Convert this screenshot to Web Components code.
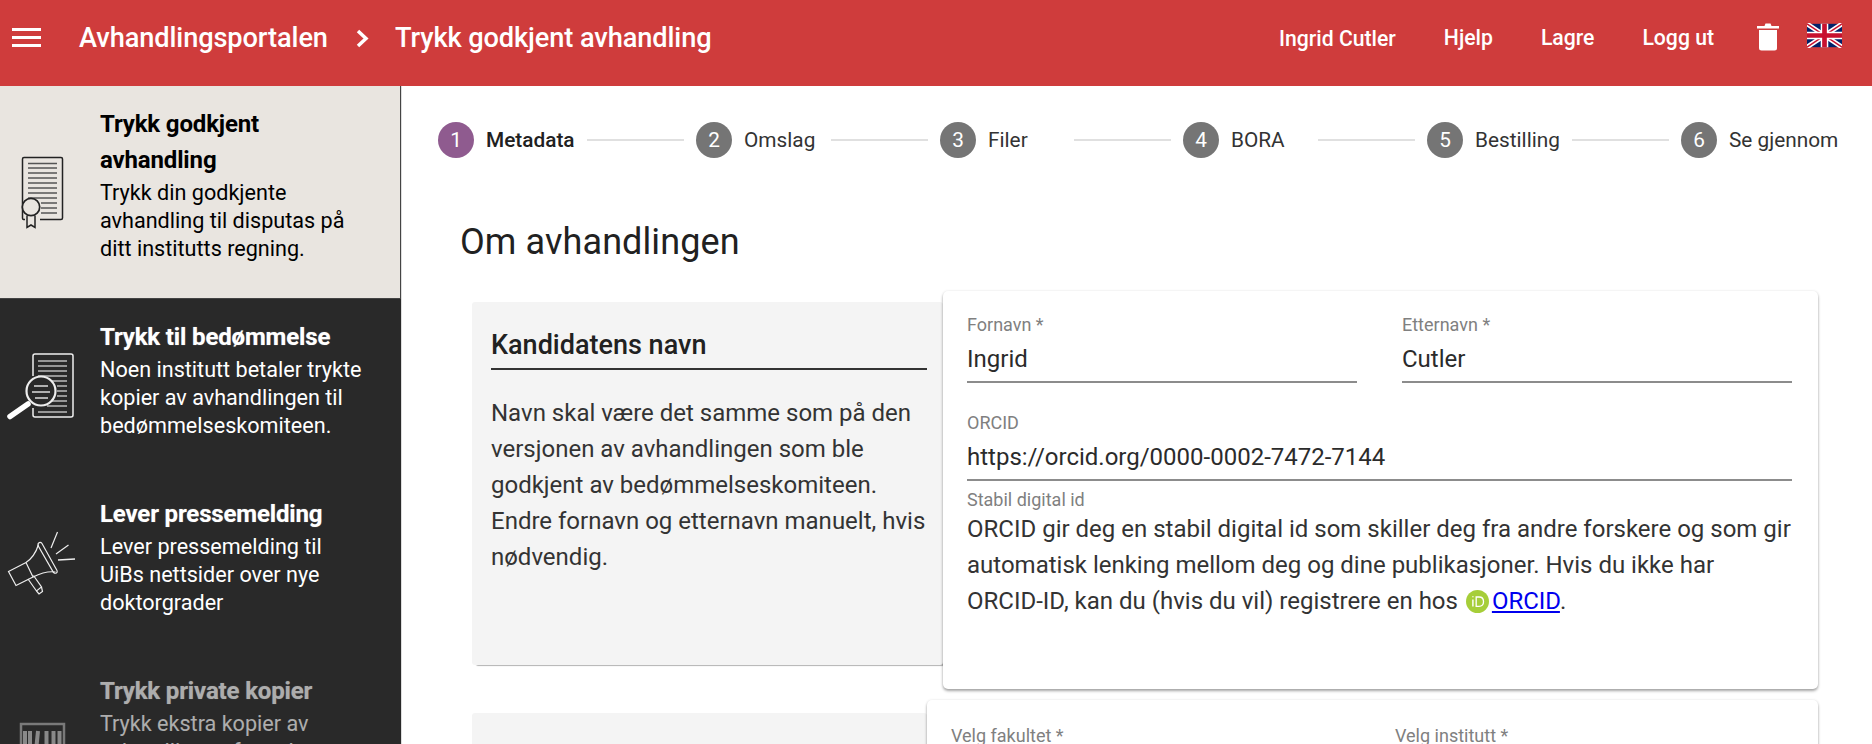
<!DOCTYPE html>
<html lang="no">
<head>
<meta charset="utf-8">
<title>Avhandlingsportalen</title>
<style>
  html, body { margin: 0; height: 100%; overflow: hidden; background: #fff; }
  body { font-family: Roboto, "Liberation Sans", sans-serif; }
</style>
</head>
<body>
<portal-app>
  <top-bar slot="top" crumb="Avhandlingsportalen" page="Trykk godkjent avhandling"></top-bar>

  <side-menu slot="side">
    <side-item active>
      <svg slot="icon" width="84" height="84" viewBox="0 0 84 84" fill="none" stroke="#222">
        <path d="M25 68.500h-1.500a1.500 1.500 0 0 1-1-1.500V8a1.500 1.500 0 0 1 1.500-1.500h37a1.500 1.500 0 0 1 1.500 1.500v59a1.500 1.500 0 0 1-1.500 1.500H40" stroke-width="1.500"/>
        <path d="M28 12.500h29M28 17h29M28 22h29M28 27h29M28 32h29M28 37h29M28 42h29M28 47h29M41 52h16M41 57h16M41 62h16" stroke="#555" stroke-width="1.300"/>
        <circle cx="31" cy="56" r="8.700" fill="#e9e5e0" stroke-width="1.700"/>
        <path d="M27 64.500v12l4-2.500 4 2.500v-12" stroke-width="1.500"/>
      </svg>
      <span slot="title">Trykk godkjent avhandling</span>
      Trykk din godkjente avhandling til disputas på ditt institutts regning.
    </side-item>
    <side-item>
      <svg slot="icon" width="84" height="84" viewBox="0 0 84 84" fill="none" stroke="#eee">
        <path d="M33 30V10a2 2 0 0 1 2-2h36a2 2 0 0 1 2 2v59a2 2 0 0 1-2 2H35a2 2 0 0 1-2-2v-7" stroke-width="1.500"/>
        <path d="M38 15h29M38 20h29M38 25h29M38 30h29M50 35h17M57 40h10M57 45h10M57 50h10M50 55h17M47 60h20M38 66h29" stroke="#bbb" stroke-width="1.500"/>
        <circle cx="41" cy="45" r="14.500" fill="#292929" stroke-width="2.200"/>
        <path d="M34 40h14M32 46h18M35 52h13" stroke="#ddd" stroke-width="1.500"/>
        <path d="M10 70.500 28 58" stroke="#fff" stroke-width="5.500" stroke-linecap="round"/>
      </svg>
      <span slot="title">Trykk til bedømmelse</span>
      Noen institutt betaler trykte kopier av avhandlingen til bedømmelseskomiteen.
    </side-item>
    <side-item>
      <svg slot="icon" width="84" height="84" viewBox="0 0 84 84" fill="none" stroke="#eee" stroke-width="1.200">
        <path d="M8.500 48.500 26 39.500l7 14.500-17 8.500z"/>
        <path d="M26 39.500c6-4 10-10 12.500-18M33 54c8-4 15-6 22.500-5"/>
        <path d="M38 22.500c-.5-3 2.500-4 4-2l15 27c1 2.500-1.500 3.500-3.500 2z"/>
        <path d="M28 56l8.500 12 5-4-8-11.500M36.500 68l2.500 3 3.500-2.500-1-4.500"/>
        <path d="M57.500 9 51 25M68.500 22 56 31"/>
        <path d="M58 37l17-1" stroke-width="1.600"/>
      </svg>
      <span slot="title">Lever pressemelding</span>
      Lever pressemelding til UiBs nettsider over nye doktorgrader
    </side-item>
    <side-item disabled>
      <svg slot="icon" width="84" height="84" viewBox="0 0 84 84" fill="none" stroke="#aaa">
        <rect x="21" y="24" width="43" height="60" stroke-width="2.500"/>
        <path d="M25 31v40M30 31v40M38 31l-4 40M46.500 31v40M53.500 31v40M59.500 31v40" stroke="#c4c4c4" stroke-width="4"/>
      </svg>
      <span slot="title">Trykk private kopier</span>
      Trykk ekstra kopier av avhandlingen for salg.
    </side-item>
  </side-menu>

  <step-bar slot="main">
    <step-item n="1" label="Metadata" width="89" active></step-item>
    <step-item n="2" label="Omslag" width="75"></step-item>
    <step-item n="3" label="Filer" width="74"></step-item>
    <step-item n="4" label="BORA" width="75"></step-item>
    <step-item n="5" label="Bestilling" width="85"></step-item>
    <step-item n="6" label="Se gjennom" width="111" last></step-item>
  </step-bar>

  <page-heading slot="main">Om avhandlingen</page-heading>

  <form-section slot="main" card-width="875" inset="11" info-height="363">
    <span slot="title">Kandidatens navn</span>
    <span slot="info">Navn skal være det samme som på den versjonen av avhandlingen som ble godkjent av bedømmelseskomiteen. Endre fornavn og etternavn manuelt, hvis nødvendig.</span>
    <form-card style="--card-height:398px">
      <div style="display:grid;grid-template-columns:390px 390px;column-gap:45px">
        <text-field label="Fornavn *" value="Ingrid"></text-field>
        <text-field label="Etternavn *" value="Cutler"></text-field>
      </div>
      <text-field label="ORCID" value="https://orcid.org/0000-0002-7472-7144" helper="Stabil digital id" style="margin-top:28px">
        ORCID gir deg en stabil digital id som skiller deg fra andre forskere og som gir automatisk lenking mellom deg og dine publikasjoner. Hvis du ikke har ORCID-ID, kan du (hvis du vil) registrere en hos <orcid-link></orcid-link>.
      </text-field>
    </form-card>
  </form-section>

  <form-section slot="main" card-width="891" inset="13" info-height="200" style="margin-top:11px">
    <span slot="title"></span>
    <form-card style="--card-height:200px;--card-top:24px">
      <div style="display:grid;grid-template-columns:395px 395px;column-gap:49px">
        <text-field label="Velg fakultet *"></text-field>
        <text-field label="Velg institutt *"></text-field>
      </div>
    </form-card>
  </form-section>
</portal-app>

<script>
class PortalApp extends HTMLElement {
  constructor() {
    super();
    this.attachShadow({ mode: 'open' }).innerHTML = `
      <style>
        :host { display: block; height: 744px; overflow: hidden; color: #212121; }
        .body { display: flex; height: 658px; }
        .main { flex: 1; min-width: 0; overflow: hidden; padding: 36px 54px 0 36px; }
      </style>
      <slot name="top"></slot>
      <div class="body">
        <slot name="side"></slot>
        <div class="main"><slot name="main"></slot></div>
      </div>`;
  }
}

class TopBar extends HTMLElement {
  constructor() {
    super();
    this.attachShadow({ mode: 'open' }).innerHTML = `
      <style>
        :host { display: flex; height: 86px; background: #cf3c3c; color: #fff; font-weight: 500; padding: 0 30px 0 12px; box-sizing: border-box; }
        .row { display: flex; align-items: center; height: 74px; }
        .left { flex: 1; height: 76px; }
        .title { font-size: 27.200px; letter-spacing: -.1px; }
        .burger { margin-right: 38px; }
        .chev { margin: 0 26px 0 28px; }
        .link { font-size: 21.200px; margin-right: 48px; }
        .user { margin-right: 48px; position: relative; top: 1px; }
        .flag { margin-left: 28px; position: relative; top: -2px; }
      </style>
      <div class="row left">
        <svg class="burger" width="29" height="20" viewBox="0 0 29 20" fill="#fff"><rect y="0" width="29" height="3"/><rect y="8" width="29" height="3"/><rect y="16" width="29" height="3"/></svg>
        <span class="title" id="crumb"></span>
        <svg class="chev" width="13" height="19" viewBox="0 0 13 19" fill="none" stroke="#fff" stroke-width="3.500"><path d="M2 2l8 7.500L2 17"/></svg>
        <span class="title" id="page"></span>
      </div>
      <div class="row">
        <span class="link user">Ingrid Cutler</span>
        <span class="link">Hjelp</span>
        <span class="link">Lagre</span>
        <span class="link" style="margin-right:43px">Logg ut</span>
        <svg width="22" height="28" viewBox="0 0 22 28" fill="#fff"><path d="M0 3h7.500l1-2.500h5l1 2.500H22v2.500H0z"/><path d="M2 7h18v18a2.500 2.500 0 0 1-2.500 2.500h-13A2.500 2.500 0 0 1 2 25z"/></svg>
        <svg class="flag" width="35" height="25" viewBox="0 0 60 40">
          <rect width="60" height="40" fill="#012169"/>
          <path d="M0 0l60 40M60 0L0 40" stroke="#fff" stroke-width="8"/>
          <path d="M0 0l60 40M60 0L0 40" stroke="#c8102e" stroke-width="2.500"/>
          <path d="M30 0v40M0 20h60" stroke="#fff" stroke-width="13"/>
          <path d="M30 0v40M0 20h60" stroke="#c8102e" stroke-width="8"/>
        </svg>
      </div>`;
    this.shadowRoot.getElementById('crumb').textContent = this.getAttribute('crumb');
    this.shadowRoot.getElementById('page').textContent = this.getAttribute('page');
  }
}

class SideMenu extends HTMLElement {
  constructor() {
    super();
    this.attachShadow({ mode: 'open' }).innerHTML = `
      <style>
        :host { display: block; width: 402px; flex: none; box-sizing: border-box; background: #292929; border-right: 1px solid #ddd; overflow: hidden; }
      </style>
      <slot></slot>`;
  }
}

class SideItem extends HTMLElement {
  constructor() {
    super();
    this.attachShadow({ mode: 'open' }).innerHTML = `
      <style>
        :host { display: flex; align-items: center; box-sizing: border-box; min-height: 177px; color: #fff; padding: 20px 35px 36px 0; }
        :host([active]) { background: #e9e5e0; color: #000; box-shadow: inset -1px -1px 0 #444; }
        :host([disabled]) .text, :host([disabled]) .icon { opacity: .62; }
        :host(:not([active])) .title { text-shadow: 0 0 1px rgba(255,255,255,.5); }
        .icon { width: 84px; height: 84px; flex: none; margin-right: 16px; position: relative; top: 8px; }
        .text { align-self: flex-start; }
        .title { font-size: 24px; font-weight: 700; line-height: 36px; letter-spacing: -.15px; }
        .desc { font-size: 21.600px; line-height: 28px; padding-top: 1px; }
      </style>
      <div class="icon"><slot name="icon"></slot></div>
      <div class="text">
        <div class="title"><slot name="title"></slot></div>
        <div class="desc"><slot></slot></div>
      </div>`;
  }
}

class StepBar extends HTMLElement {
  constructor() {
    super();
    this.attachShadow({ mode: 'open' }).innerHTML = `
      <style>:host { display: flex; height: 36px; }</style>
      <slot></slot>`;
  }
}

class StepItem extends HTMLElement {
  constructor() {
    super();
    this.attachShadow({ mode: 'open' }).innerHTML = `
      <style>
        :host { display: flex; align-items: center; font-size: 20.800px; color: #333; }
        :host([active]) { color: #212121; font-weight: 500; }
        .dot { width: 36px; height: 36px; border-radius: 50%; background: #757575; color: #fff; display: flex; align-items: center; justify-content: center; margin-right: 12px; font-weight: 400; }
        :host([active]) .dot { background: #8f5b8f; }
        .line { width: 97px; height: 2px; background: #e0e0e0; margin: 0 12px; }
        :host([last]) .line { display: none; }
      </style>
      <div class="dot"></div>
      <div class="label"></div>
      <div class="line"></div>`;
    this.shadowRoot.querySelector('.dot').textContent = this.getAttribute('n');
    const label = this.shadowRoot.querySelector('.label');
    label.textContent = this.getAttribute('label');
    label.style.width = this.getAttribute('width') + 'px';
  }
}

class PageHeading extends HTMLElement {
  constructor() {
    super();
    this.attachShadow({ mode: 'open' }).innerHTML = `
      <style>
        :host { display: block; box-sizing: border-box; font-size: 36px; line-height: 40px; padding: 64px 0 0 22px; height: 133px; color: #212121; letter-spacing: .1px; }
      </style>
      <slot></slot>`;
  }
}

// grey info panel on the left, white card laid over its right side
class FormSection extends HTMLElement {
  constructor() {
    super();
    this.attachShadow({ mode: 'open' }).innerHTML = `
      <style>
        :host { display: flex; align-items: flex-start; margin-left: 34px; }
        .info { flex: 1; min-width: 0; box-sizing: border-box; background: #f4f4f4; border-radius: 3px; padding: 18px 16px 0 19px; box-shadow: 3px 2px 1px -1px rgba(0,0,0,.3); }
        .title { font-size: 27px; font-weight: 500; line-height: 36px; height: 50px; padding-top: 7px; box-sizing: border-box; border-bottom: 2px solid #333; }
        .title.empty { border: 0; }
        .text { font-size: 24px; line-height: 36px; color: #333; margin-top: 25px; }
        .card { flex: none; position: relative; }
      </style>
      <div class="info">
        <div class="title"><slot name="title"></slot></div>
        <div class="text"><slot name="info"></slot></div>
      </div>
      <div class="card"><slot></slot></div>`;
    const info = this.shadowRoot.querySelector('.info');
    info.style.marginTop = this.getAttribute('inset') + 'px';
    info.style.height = this.getAttribute('info-height') + 'px';
    this.shadowRoot.querySelector('.card').style.width = this.getAttribute('card-width') + 'px';
    if (!this.querySelector('[slot=title]').textContent) this.shadowRoot.querySelector('.title').classList.add('empty');
  }
}

class FormCard extends HTMLElement {
  constructor() {
    super();
    this.attachShadow({ mode: 'open' }).innerHTML = `
      <style>
        :host { display: block; box-sizing: border-box; height: var(--card-height, auto); background: #fff; border-radius: 5px; padding: var(--card-top, 22px) 26px 0 24px; box-shadow: 0 2px 3px rgba(0,0,0,.35), 0 0 3px rgba(0,0,0,.08); }
      </style>
      <slot></slot>`;
  }
}

class TextField extends HTMLElement {
  constructor() {
    super();
    this.attachShadow({ mode: 'open' }).innerHTML = `
      <style>
        :host { display: block; font-size: 24px; color: #2b2b2b; }
        .label { font-size: 18px; line-height: 24px; color: #808080; }
        .value { height: 46px; line-height: 44px; box-sizing: border-box; border-bottom: 2px solid #8c8c8c; }
        .helper { font-size: 18px; line-height: 20px; color: #808080; margin-top: 9px; }
        .help { line-height: 36px; color: #333; margin-top: 1px; }
        .none { display: none; }
      </style>
      <div class="label"></div>
      <div class="value"></div>
      <div class="helper"></div>
      <div class="help"><slot></slot></div>`;
    const s = this.shadowRoot;
    s.querySelector('.label').textContent = this.getAttribute('label');
    s.querySelector('.value').textContent = this.getAttribute('value') || '';
    if (this.hasAttribute('helper')) s.querySelector('.helper').textContent = this.getAttribute('helper');
    else { s.querySelector('.helper').classList.add('none'); s.querySelector('.help').classList.add('none'); }
  }
}

class OrcidLink extends HTMLElement {
  constructor() {
    super();
    this.attachShadow({ mode: 'open' }).innerHTML = `
      <style>
        :host { display: inline; }
        svg { vertical-align: -4px; margin-left: 2px; margin-right: 3px; }
        a { color: #0000ee; }
      </style>
      <svg width="23" height="23" viewBox="0 0 21 21"><circle cx="10.500" cy="10.500" r="10.500" fill="#a6ce39"/><path d="M6.300 8.600v6.500M6.300 5.700v.9" stroke="#fff" stroke-width="1.300" fill="none"/><path d="M9.300 6.400h2.600c2.600 0 4.100 1.700 4.100 4.300s-1.500 4.300-4.100 4.300H9.300z" stroke="#fff" stroke-width="1.200" fill="none"/></svg><a href="#">ORCID</a>`;
  }
}

customElements.define('portal-app', PortalApp);
customElements.define('top-bar', TopBar);
customElements.define('side-menu', SideMenu);
customElements.define('side-item', SideItem);
customElements.define('step-bar', StepBar);
customElements.define('step-item', StepItem);
customElements.define('page-heading', PageHeading);
customElements.define('form-section', FormSection);
customElements.define('form-card', FormCard);
customElements.define('text-field', TextField);
customElements.define('orcid-link', OrcidLink);
</script>
</body>
</html>
